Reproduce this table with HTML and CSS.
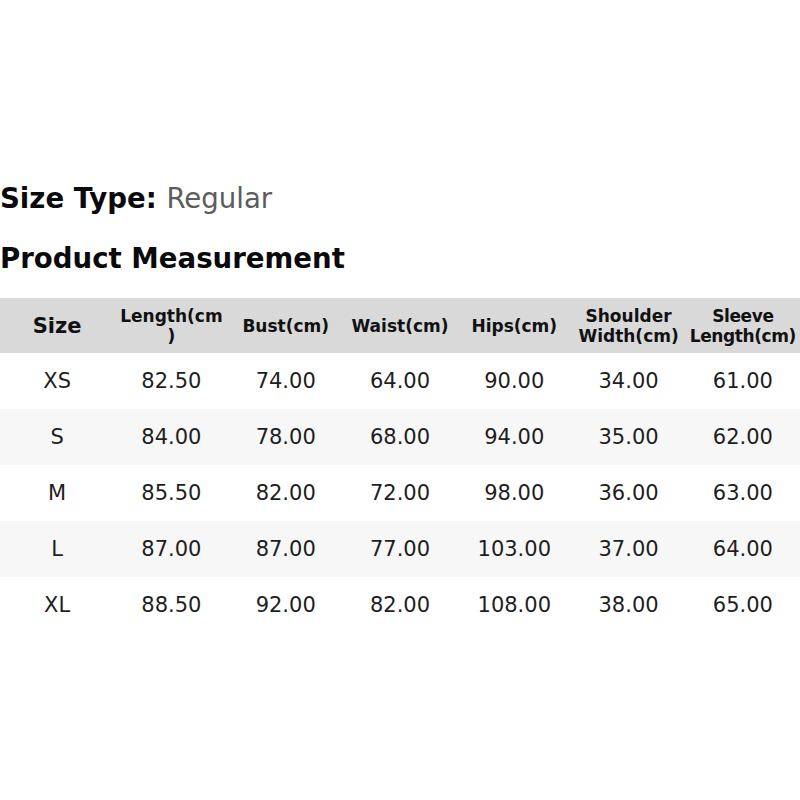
FILE: index.html
```html
<!DOCTYPE html>
<html>
<head>
<meta charset="utf-8">
<link rel="stylesheet" href="styles.css">
</head>
<body>
<main class="page">
  <h2 class="size-type"><span class="label">Size Type:</span> <span class="value">Regular</span></h2>
  <h2 class="section-title">Product Measurement</h2>
  <table class="size-table">
    <thead>
      <tr>
        <th class="col-size">Size</th>
        <th>Length(cm)</th>
        <th>Bust(cm)</th>
        <th>Waist(cm)</th>
        <th>Hips(cm)</th>
        <th>Shoulder Width(cm)</th>
        <th class="col-last">Sleeve Length(cm)</th>
      </tr>
    </thead>
    <tbody>
      <tr><td>XS</td><td>82.50</td><td>74.00</td><td>64.00</td><td>90.00</td><td>34.00</td><td>61.00</td></tr>
      <tr><td>S</td><td>84.00</td><td>78.00</td><td>68.00</td><td>94.00</td><td>35.00</td><td>62.00</td></tr>
      <tr><td>M</td><td>85.50</td><td>82.00</td><td>72.00</td><td>98.00</td><td>36.00</td><td>63.00</td></tr>
      <tr><td>L</td><td>87.00</td><td>87.00</td><td>77.00</td><td>103.00</td><td>37.00</td><td>64.00</td></tr>
      <tr><td>XL</td><td>88.50</td><td>92.00</td><td>82.00</td><td>108.00</td><td>38.00</td><td>65.00</td></tr>
    </tbody>
  </table>
</main>
</body>
</html>
```

FILE: styles.css
```css
html, body {
  margin: 0;
  padding: 0;
  background: #ffffff;
}

.page {
  font-family: "DejaVu Sans", sans-serif;
  color: #111;
  padding-top: 183px;
}

.size-type,
.section-title {
  margin: 0;
  font-size: 27.6px;
  line-height: 31px;
  font-weight: bold;
  color: #0a0a0a;
}

.size-type .value {
  font-weight: normal;
  color: #5c5c5c;
}

.section-title {
  margin-top: 29px;
}

.size-table {
  margin-top: 24px;
  width: 800px;
  table-layout: fixed;
  border-collapse: collapse;
  border-spacing: 0;
}

.size-table th {
  background: #d9d9d9;
  height: 55px;
  padding: 0 4px;
  font-size: 17px;
  line-height: 20px;
  font-weight: bold;
  color: #111;
  text-align: center;
  vertical-align: middle;
  overflow-wrap: anywhere;
}

.size-table th.col-size {
  font-size: 21px;
}

.size-table th.col-last {
  padding: 0;
  letter-spacing: -0.4px;
}

.size-table td {
  height: 56px;
  padding: 0;
  font-size: 21px;
  color: #1e1e1e;
  text-align: center;
  vertical-align: middle;
}

.size-table tbody tr:nth-child(even) td {
  background: #f7f7f7;
}
```
